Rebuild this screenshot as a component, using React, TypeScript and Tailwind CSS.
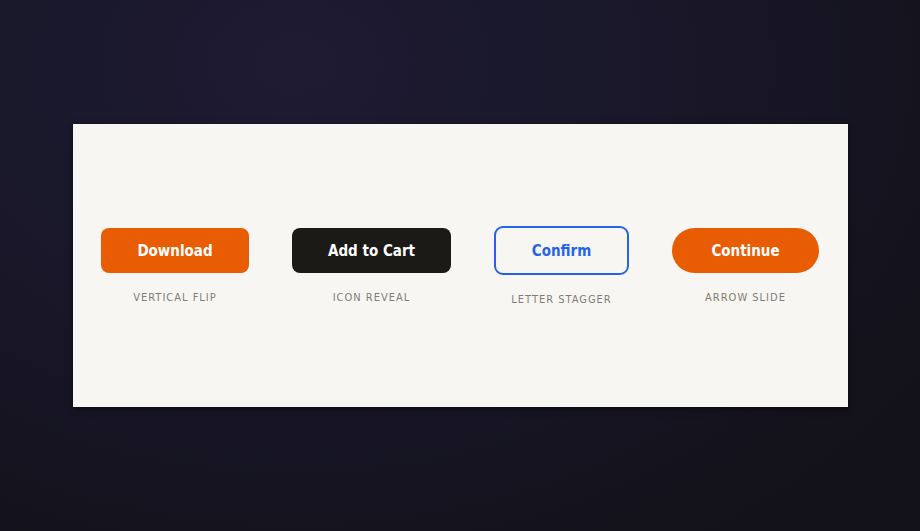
import React from 'react';

const font = { fontFamily: '"DejaVu Sans Condensed", "DejaVu Sans", Verdana, sans-serif', fontStretch: 'condensed' };

function Demo({ label, children }: { label: string; children: React.ReactNode }) {
  return (
    <div className="flex flex-col items-center gap-[18px]">
      {children}
      <span className="text-[11px] leading-[13px] tracking-[1px] text-[#807d77] uppercase">{label}</span>
    </div>
  );
}

export default function App() {
  return (
    <div
      className="min-h-screen w-full flex items-center justify-center bg-[radial-gradient(ellipse_at_32%_12%,#1e1b33_0%,#191729_40%,#13121a_85%)]"
      style={font}
    >
      <div className="w-[775px] h-[283px] bg-[#f7f6f2] flex items-center justify-center gap-[43px] shadow-[0_2px_6px_rgba(0,0,0,0.5)]">
        <Demo label="Vertical Flip">
          <button className="w-[148px] h-[45px] pt-[2px] rounded-lg bg-[#e85d04] text-white font-bold text-[15px]">
            Download
          </button>
        </Demo>
        <Demo label="Icon Reveal">
          <button className="w-[159px] h-[45px] pt-[2px] rounded-lg bg-[#1c1a17] text-white font-bold text-[15px]">
            Add to Cart
          </button>
        </Demo>
        <Demo label="Letter Stagger">
          <button className="w-[135px] h-[49px] pt-[2px] rounded-[9px] border-2 border-[#2563eb] bg-transparent text-[#2563eb] font-bold text-[15px]">
            Confirm
          </button>
        </Demo>
        <Demo label="Arrow Slide">
          <button className="w-[147px] h-[45px] pt-[2px] rounded-full bg-[#e85d04] text-white font-bold text-[15px]">
            Continue
          </button>
        </Demo>
      </div>
    </div>
  );
}
